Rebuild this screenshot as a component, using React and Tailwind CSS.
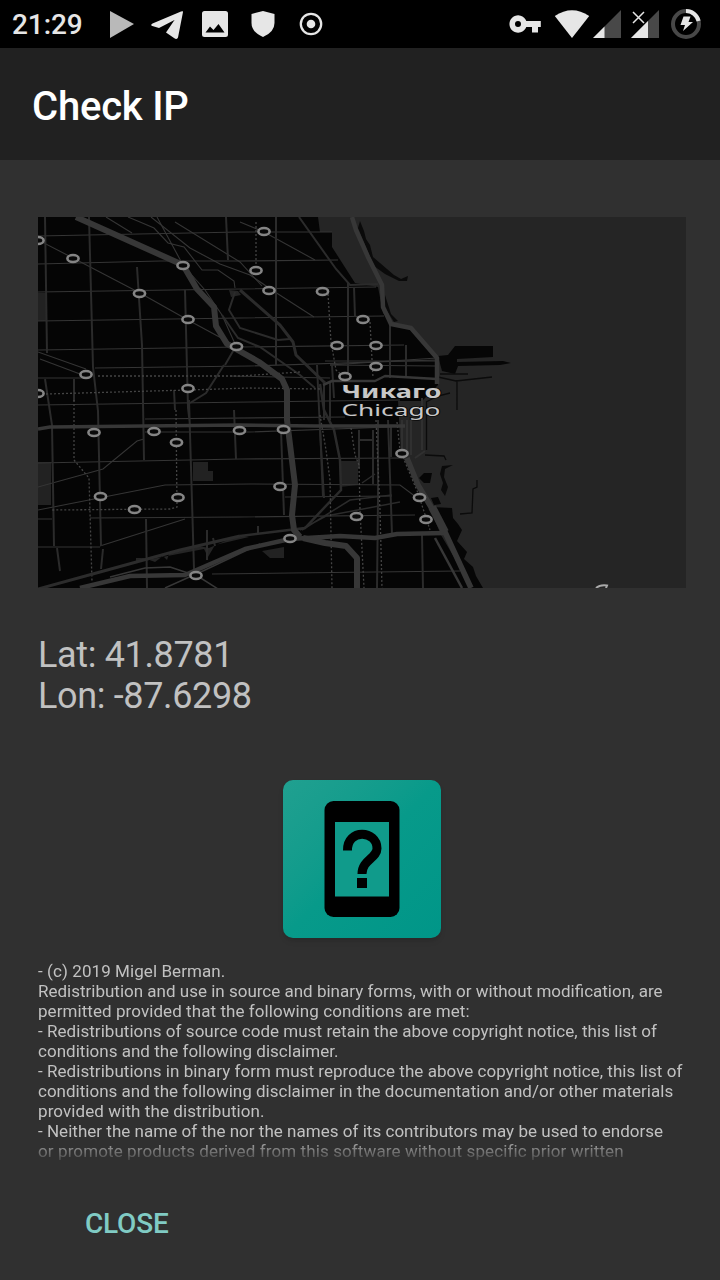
import React from "react";

const stations = [
  [38, 240.5], [73, 258.5], [139.5, 293.5], [183, 265.5], [188, 319.5], [236.5, 346.5],
  [86, 374.5], [188, 388.5], [38, 393.5], [264, 231.5], [256, 270.5], [269, 290.5],
  [322.5, 291.5], [363, 319.5], [337, 345.5], [376, 345.5], [376, 366.5], [345, 376.5],
  [94, 432.5], [154, 431.5], [176.5, 442.5], [239.5, 430.5], [283.5, 429.5], [100.5, 496.5],
  [134.5, 509.5], [178, 497.5], [280, 486.5], [196, 575.5], [290, 538.5], [356.5, 516.5],
  [402, 453.5], [419.5, 497.5], [426, 519.5],
];

const streets = [
  "M38 236L240 232L332 232", "M38 264L160 261L240 261L338 260", "M38 292L240 289L376 287",
  "M38 321L240 318L384 316", "M38 350L240 347L404 345", "M95 368L250 366L437 360", "M38 405L250 402L400 400",
  "M145 419L345 417", "M38 463L240 459L405 458", "M38 519L52 519M90 518L240 517L415 515",
  "M145 432L250 432L390 427", "M38 547L100 547M212 574L290 573L460 571", "M38 487L103 469L137 441L144 439",
  "M38 510L165 485L250 484L400 485L416 497", "M100 546L185 519", "M285 497L392 496", "M330 365L437 358",
  "M325 361L435 361M330 365L437 366", "M230 376L330 378", "M38 378L90 378", "M38 352L86 369M40 359L80 374",
  "M38 240L73 258L140 293L188 320L236 346", "M157 217L183 265L205 290L222 315L236 346", "M151 217L190 248L220 264L250 275L275 292L314 317",
  "M240 222L264 232L315 260", "M128 217L140 222L154 228L168 243L184 247L202 270L218 270L234 281L235 288",
  "M106 217L132 233", "M175 222L240 262L262 286",
];

const avenues = [
  "M45 217L47 353M45 379L52 425L54 546", "M89 217L93 367L98 411L101 546", "M137 267L142 345L144 460M146 519L147 588",
  "M185 290L188 408L190 425M189 400L194 569", "M226 217L228 260M234 410L236 459", "M276 217L276 365", "M348 283L348 378M354 287L355 317",
  "M390 325L390 378M406 345L406 378", "M281 430L284 515", "M320 425L323 497M332 365L334 398", "M378 420L378 500L377 588",
  "M388 420L392 534M422 535L423 588", "M359 430L359 468M373 430L373 484M391 427L391 457M359 440H374", "M74 379L74 401M174 390L175 410", "M57 548L60 571M103 549L101 569",
  "M317 365L320 430L324 498",
];

const dashed = [
  "M74 400L74 460L89 478L92 582", "M176 410L177 507L170 509L52 510", "M256 222L256 265", "M98 376L240 376L300 372",
  "M46 394L188 390L250 388L320 389", "M328 294L331 342L336 370L343 376", "M370 322L373 378", "M320 415L326 450L330 480L332 588",
  "M351 428L355 455L359 465L360 510L364 588", "M376 420L380 510L382 588", "M397 422L400 450L418 493L430 530",
];

function CityMap() {
  return (
    <svg className="block h-[371px] w-[648px]" viewBox="38 217 648 371" fill="none">
      <rect x="38" y="217" width="648" height="371" fill="#252525" />
      <path d="M38 217H318L320 232H332V247L355 283L378 287L383 313L393 325L411 330L438 357L438 385L422 401H398L401 455L421 487L441 535L472 588H38Z" fill="#050505" />
      <path d="M438 356L448 355L455 346H493V357L457 359V362L503 361L511 363L500 365L458 366L455 374L442 371Z M419 478L424 473H432L430 483L424 483Z M431 498L438 497L441 504L434 505Z M432 507L452 508L453 518L458 524L462 530L457 541L467 552L464 559L473 567L476 576L483 588H470L448 535Z" fill="#060606" />
      <path d="M360 221L364 231L366 239L370 245L373 257L394 275L401 279L408 276L407 281L399 281L385 274L374 266L358 228Z M385 295L391 314L398 321L394 322L384 306Z M442 466L453 465L445 469L444 477L448 487L445 496L441 490L443 483L440 474Z" fill="#0a0a0a" />
      <g stroke="#0b0b0b" strokeWidth="1.3">
        <path d="M426.500 402V450M425 455L444 456L446 460M477 480V487L473 489L472 513L460 514M457 380V410M440 374L468 374M438 377L456 381L492 377M426 402L438 396L450 393" />
      </g>
      <path d="M38 293h8v28h-8z M38 462h13v43h-14z M340 461h18v24l-18 2z M193 462h15v9h5v10h-20z M262 551l22-4v11h-14z" fill="#222" />
      <path d="M229 290l9 1 3 4-10 2z M136 558l8 0 11 4 8-6 4 4 2-6 30-8 10 2 30-13 10 2-34 8-7 12-4-8-52 10-16 3z" fill="#252525" />
      <g stroke="#353535" strokeWidth="1.1">
        {streets.map((d) => <path key={d} d={d} />)}
      </g>
      <g stroke="#2b2b2b" strokeWidth="2">
        {avenues.map((d) => <path key={d} d={d} />)}
        <path d="M402 420V450M407 420V450M411 420V455M422 398V450M415 458L425 451" stroke="#303030" />
        <path d="M299 217L336 269L350 285L378 284" />
        <path d="M240 290L280 325L293 342L296 355L325 383" strokeWidth="3" />
        <path d="M235 292L229 310L240 328L278 340L290 339M222 315L238 338L260 347L300 375L315 388" />
        <path d="M320 384L324 410L334 430L340 460L341 490L305 528L240 536" strokeWidth="2.5" />
        <path d="M190 403L206 393L224 365M236 346L225 365M207 530V560M213 538L215 546M258 526V534" />
        <path d="M302 530L350 500L392 495M362 483L375 474M300 530L326 516L400 502" strokeWidth="1.5" />
        <path d="M324 385V420M330 383V420" />
      </g>
      <g stroke="#444" strokeWidth="1.3" strokeDasharray="2 2">
        {dashed.map((d) => <path key={d} d={d} />)}
      </g>
      <g stroke="#373737" strokeLinejoin="round">
        <path d="M76 217L183 265L197 289L214 307L216 326L227 344L259 362L282 379L287 390V420L295 485L292 515L294 530L300 537" strokeWidth="6" />
        <path d="M38 429L50 427L240 425L315 426L405 426" strokeWidth="3.5" />
        <path d="M38 589L100 572L180 550L240 536" stroke="#2c2c2c" strokeWidth="3" />
        <path d="M80 588L130 576L185 575L245 549L290 539L340 536L375 538L397 534L445 533" strokeWidth="4.5" />
        <path d="M165 588L205 570L260 544M196 575L218 589M110 577L145 568L170 567L188 573" strokeWidth="1.5" />
        <path d="M303 538L325 543L346 546L357 558V588" strokeWidth="6" />
        <path d="M352 217L356 230L368 257L382 285L383 307L391 324L411 328L437 358V384" strokeWidth="4.5" />
        <path d="M323 385L332 381L375 381L385 376L437 379" strokeWidth="2.5" />
        <path d="M407 458L418 485L431 507L445 532L471 588" strokeWidth="5.5" />
        <path d="M432 507L445 532" strokeWidth="8" />
        <path d="M435 538L462 588" strokeWidth="2.5" />
      </g>
      <g fill="#090909" stroke="#858585" strokeWidth="2.6">
        {stations.map(([x, y]) => <ellipse key={`${x}-${y}`} cx={x} cy={y} rx="5.6" ry="3.5" />)}
      </g>
      <g fill="#c8c8c8" stroke="#090909" strokeWidth="1.5" paintOrder="stroke" fontFamily="'Noto Sans', sans-serif">
        <text x="341.5" y="398" fontSize="18" fontWeight="700" textLength="100" lengthAdjust="spacingAndGlyphs">Чикаго</text>
        <text x="341.5" y="416" fontSize="17" textLength="99" lengthAdjust="spacingAndGlyphs">Chicago</text>
      </g>
      <path d="M596 588Q600 584.500 607 585.500L606 588" stroke="#aaa" strokeWidth="2" />
    </svg>
  );
}

function StatusIcons() {
  return (
    <svg className="block h-12 w-[620px]" viewBox="100 0 620 48" fill="#e6e6e6">
      <path d="M110 11L134 24L110 38Z" fill="#b9b9b9" />
      <path d="M183 12L178 37.500Q177 40 174 38L166 32.500L174.500 20L159 28L151.500 25.700Q150.500 24.500 152.500 23.500L181 11.500Q183.500 10.800 183 12Z" />
      <path d="M204.500 11H225.500Q228 11 228 13.500V34.500Q228 37 225.500 37H204.500Q202 37 202 34.500V13.500Q202 11 204.500 11ZM205.500 32.500H224.500L218.500 24L213.500 30L210 26.500Z" fillRule="evenodd" />
      <path d="M263 11L274.500 14V23Q274.500 32 263 37Q251.500 32 251.500 23V14Z" />
      <circle cx="311" cy="24" r="10.200" fill="none" stroke="#e6e6e6" strokeWidth="2.300" />
      <circle cx="311" cy="24" r="4.300" />
      <path d="M526.300 21A8.700 8.700 0 1 0 526.300 27H532V32.500H538V27H540.800V21ZM518 21A3 3 0 1 1 518 27A3 3 0 1 1 518 21Z" fillRule="evenodd" />
      <path d="M572 38L554.800 16Q572 4.500 589.200 16Z" />
      <path d="M621 10V38H593ZM659 10V38H631Z" fill="#484848" />
      <path d="M604.500 26.500V38H593ZM648 21V38H631Z" />
      <path d="M633 12L644 23M644 12L633 23" stroke="#e6e6e6" strokeWidth="1.500" />
      <circle cx="686" cy="24" r="13" fill="none" stroke="#484848" strokeWidth="4" />
      <path d="M686 11A13 13 0 0 1 698.600 21" fill="none" stroke="#e6e6e6" strokeWidth="4" />
      <path d="M683.500 16.500H690.500L688.500 22H693L683 31L685 25H680.500Z" />
    </svg>
  );
}

function AppLogo() {
  return (
    <div className="flex h-[158px] w-[158px] items-center justify-center rounded-[10px] bg-linear-to-br from-[#20a090] via-[#079a8a] to-[#009688] shadow-md">
      <svg className="h-[118px] w-[76px]" viewBox="0 0 76 118">
        <rect x="0.500" y="1" width="75" height="116" rx="9" fill="#000" />
        <rect x="11" y="22" width="54" height="74.500" fill="#109b8b" />
        <path d="M23.500 50.500C23 28.500 53 30 53 48.500C53 58 38 60 38 74" fill="none" stroke="#000" strokeWidth="9" />
        <rect x="33" y="78" width="10" height="10" fill="#000" />
      </svg>
    </div>
  );
}

const licence = [
  ["- (c) 2019 Migel Berman.", "tracking-[0.08px]"],
  ["Redistribution and use in source and binary forms, with or without modification, are", "tracking-normal"],
  ["permitted provided that the following conditions are met:", "tracking-[0.07px]"],
  ["- Redistributions of source code must retain the above copyright notice, this list of", "tracking-[0.045px]"],
  ["conditions and the following disclaimer.", "tracking-[0.02px]"],
  ["- Redistributions in binary form must reproduce the above copyright notice, this list of", "tracking-[0.045px]"],
  ["conditions and the following disclaimer in the documentation and/or other materials", "tracking-[0.01px]"],
  ["provided with the distribution.", "tracking-[0.09px]"],
  ["- Neither the name of the nor the names of its contributors may be used to endorse", "tracking-[0.025px]"],
  ["or promote products derived from this software without specific prior written", "tracking-[0.11px]"],
];

export default function App() {
  return (
    <div className="flex h-[1280px] w-[720px] flex-col overflow-hidden bg-[#303030] font-['Roboto',sans-serif] text-[#c1c1c1]">
      <header className="flex h-12 shrink-0 items-center bg-black">
        <div className="w-[100px] pt-0.5 pl-3 text-[28px] leading-[48px] font-medium tracking-[-0.1px] text-[#e6e6e6]">21:29</div>
        <StatusIcons />
      </header>
      <div className="flex h-28 shrink-0 items-center bg-[#212121] pt-1.5 pl-8">
        <h1 className="text-[40px] leading-none font-medium tracking-[-0.2px] text-white">Check IP</h1>
      </div>
      <main className="flex flex-col pt-[57px] pl-[38px]">
        <CityMap />
        <div className="mt-[47px] text-[36px] leading-[41px] tracking-[-0.35px]">
          <p>Lat: 41.8781</p>
          <p>Lon: -87.6298</p>
        </div>
        <div className="mt-[63px] flex w-[648px] justify-center">
          <AppLogo />
        </div>
        <div className="mt-[23px] h-[201px] overflow-hidden mask-[linear-gradient(to_bottom,black_176px,transparent_204px)] text-[17px] leading-5 whitespace-nowrap">
          {licence.map(([line, tracking]) => <p key={line} className={tracking}>{line}</p>)}
        </div>
        <button className="mt-[46px] ml-[47px] self-start text-[28px] leading-8 font-medium tracking-[-0.2px] text-[#80cbc4]">CLOSE</button>
      </main>
    </div>
  );
}
